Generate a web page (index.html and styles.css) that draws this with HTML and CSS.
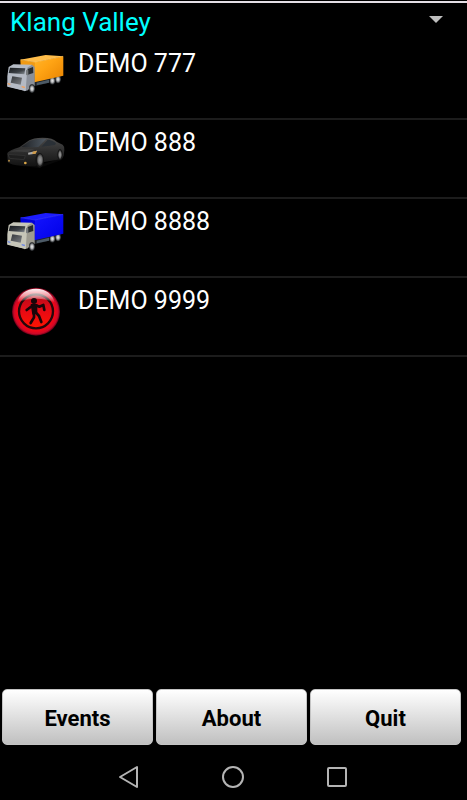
FILE: index.html
```html
<!DOCTYPE html>
<html lang="en">
<head>
    <meta charset="UTF-8">
    <meta name="viewport" content="width=device-width, initial-scale=1.0">
    <title>Vehicles</title>
    <link rel="stylesheet" href="styles.css">
</head>
<body>
    <!-- shared shapes and gradients -->
    <svg class="defs" width="0" height="0" aria-hidden="true">
        <defs>
            <linearGradient id="orangeSide" x1="0" y1="0" x2="1" y2="1">
                <stop offset="0" stop-color="#ffb52b"/>
                <stop offset="0.4" stop-color="#ffa414"/>
                <stop offset="1" stop-color="#e88200"/>
            </linearGradient>
            <linearGradient id="blueSide" x1="0" y1="0" x2="1" y2="1">
                <stop offset="0" stop-color="#1414ff"/>
                <stop offset="1" stop-color="#0000e6"/>
            </linearGradient>
            <linearGradient id="glass" x1="0" y1="0" x2="1" y2="1">
                <stop offset="0" stop-color="#15181b"/>
                <stop offset="0.6" stop-color="#3c4146"/>
                <stop offset="1" stop-color="#8d949a"/>
            </linearGradient>
            <radialGradient id="wheel">
                <stop offset="0" stop-color="#eeeeee"/>
                <stop offset="0.45" stop-color="#b4b6b8"/>
                <stop offset="0.75" stop-color="#55585b"/>
                <stop offset="1" stop-color="#15171a"/>
            </radialGradient>
            <linearGradient id="grille" x1="0" y1="0" x2="1" y2="1">
                <stop offset="0" stop-color="#33363a"/>
                <stop offset="1" stop-color="#7b7f83"/>
            </linearGradient>
            <linearGradient id="carBody" x1="0" y1="0" x2="0" y2="1">
                <stop offset="0" stop-color="#4a4a4a"/>
                <stop offset="0.5" stop-color="#2c2c2c"/>
                <stop offset="1" stop-color="#121212"/>
            </linearGradient>
            <linearGradient id="carGlass" x1="0" y1="0" x2="1" y2="0">
                <stop offset="0" stop-color="#1e2023"/>
                <stop offset="1" stop-color="#4f5963"/>
            </linearGradient>
            <radialGradient id="carWheel">
                <stop offset="0" stop-color="#9a9a9a"/>
                <stop offset="0.6" stop-color="#747474"/>
                <stop offset="1" stop-color="#1c1c1c"/>
            </radialGradient>
            <radialGradient id="ring">
                <stop offset="0" stop-color="#ff1010"/>
                <stop offset="0.8" stop-color="#ee0618"/>
                <stop offset="0.92" stop-color="#cc0828"/>
                <stop offset="1" stop-color="#5c0014"/>
            </radialGradient>
            <linearGradient id="disc" x1="0" y1="0" x2="0" y2="1">
                <stop offset="0" stop-color="#b80a1a"/>
                <stop offset="0.5" stop-color="#e80a14"/>
                <stop offset="1" stop-color="#ff1400"/>
            </linearGradient>
            <linearGradient id="shine" x1="0" y1="0" x2="0" y2="1">
                <stop offset="0" stop-color="#ffffff" stop-opacity="0.95"/>
                <stop offset="0.5" stop-color="#ffffff" stop-opacity="0.6"/>
                <stop offset="1" stop-color="#ffffff" stop-opacity="0"/>
            </linearGradient>
            <symbol id="truck" viewBox="0 0 225 180">
                <path class="chassis" d="M78 112 L182 93 L182 104 L104 124 Z"/>
                <ellipse cx="174" cy="103" rx="9" ry="12" fill="url(#wheel)"/>
                <ellipse cx="157" cy="107" rx="9" ry="12" fill="url(#wheel)"/>
                <path class="box-top" d="M61 44 L137 30 L190 34 L106 52 Z"/>
                <path class="box-front" d="M61 44 L106 51 L103 112 L64 100 Z"/>
                <path class="box-side" d="M105 51 L190 34 L190 92 L103 112 Z"/>
                <path class="box-edge" d="M62 44 L105 51 L189 34"/>
                <path class="cab-side" d="M74 66 L96 59 L104 66 L104 124 L94 121 L84 136 L73 139 Z"/>
                <path class="cab" d="M26 66 L40 58 L96 59 L82 68 L77 138 L22 124 L22 94 Z"/>
                <path d="M30 68 L76 70 L73 88 L26 84 Z" fill="url(#glass)"/>
                <path d="M83 72 L99 66 L100 84 L83 89 Z" fill="#272b2e"/>
                <rect x="78" y="74" width="7" height="17" rx="3" fill="#777b7d"/>
                <path d="M37 94 L66 98 L62 119 L32 113 Z" fill="url(#grille)"/>
                <path class="bumper" d="M22 113 L32 115 L65 122 L78 124 L76 138 L22 125 Z"/>
                <ellipse cx="96" cy="131" rx="9" ry="13" fill="url(#wheel)"/>
                <path class="lamp" d="M23 114 L31 116 L31 120 L23 118 Z M65 123 L75 125 L74 130 L65 127 Z"/>
                <path d="M110 113 L147 104 L147 113 L110 121 Z" fill="#4c5a66"/>
            </symbol>
        </defs>
    </svg>

    <div class="screen">
        <header class="region">
            <select class="region-select" aria-label="Region">
                <option>Klang Valley</option>
            </select>
        </header>

        <ul class="vehicles">
            <li class="vehicle">
                <svg class="vehicle-icon truck-orange" aria-hidden="true"><use href="#truck"/></svg>
                <span class="vehicle-name">DEMO 777</span>
            </li>
            <li class="vehicle">
                <svg class="vehicle-icon" viewBox="0 -3 225 180" aria-hidden="true">
                    <path d="M24 105 L110 122 L188 98 L182 106 L118 129 L70 124 L24 114 Z" fill="#080808"/>
                    <path d="M22 84 Q27 77 58 67 L88 46 Q98 39 128 38 Q159 38 171 51 L188 59 Q194 64 193 75 L191 92 L186 102 L128 112 L106 124 L65 122 Q31 120 23 111 Z" fill="url(#carBody)"/>
                    <path d="M64 66 L90 47 Q105 41 139 41 L115 66 Q86 68 64 66 Z" fill="url(#carGlass)"/>
                    <path d="M124 65 L143 44 Q156 44 168 55 L165 60 Z" fill="#2a3036"/>
                    <path d="M29 80 Q57 70 104 72 L83 82 Q53 78 29 80 Z" fill="#3c3c3c"/>
                    <path d="M24 88 L76 92 L72 104 L29 100 Z" fill="#1e1e1e" stroke="#383838" stroke-width="2"/>
                    <path d="M84 83 L111 77 L106 86 L85 89 Z" fill="#a9a9a9"/>
                    <path d="M98 80 L111 77 L107 86 L97 87 Z" fill="#d29b45"/>
                    <ellipse cx="119" cy="106" rx="13" ry="22" fill="#151515"/>
                    <ellipse cx="120" cy="105" rx="10" ry="19" fill="url(#carWheel)"/>
                    <ellipse cx="180" cy="89" rx="8" ry="17" fill="#151515"/>
                    <ellipse cx="180" cy="89" rx="6" ry="14" fill="url(#carWheel)"/>
                    <circle cx="27" cy="107" r="3" fill="#b08a44"/>
                    <circle cx="76" cy="114" r="4" fill="#d9a648"/>
                </svg>
                <span class="vehicle-name">DEMO 888</span>
            </li>
            <li class="vehicle">
                <svg class="vehicle-icon truck-blue" aria-hidden="true"><use href="#truck"/></svg>
                <span class="vehicle-name">DEMO 8888</span>
            </li>
            <li class="vehicle">
                <svg class="vehicle-icon" viewBox="0 6 225 180" aria-hidden="true">
                    <circle cx="108" cy="95" r="72" fill="url(#ring)"/>
                    <circle cx="108" cy="94" r="51" fill="url(#disc)" stroke="#25080b" stroke-width="7"/>
                    <path d="M52 68 Q62 27 108 26 Q154 27 164 68 Q139 56 108 56 Q77 56 52 68 Z" fill="url(#shine)"/>
                    <circle cx="102" cy="63" r="9" fill="#180609"/>
                    <path d="M92 72 L112 72 L112 98 L97 104 Z" fill="#180609"/>
                    <path d="M96 78 L80 90 M108 76 L118 80 L130 75 L133 90 M102 98 L102 112 L92 129 M108 98 L117 108 L124 126" fill="none" stroke="#180609" stroke-width="8" stroke-linejoin="round" stroke-linecap="round"/>
                </svg>
                <span class="vehicle-name">DEMO 9999</span>
            </li>
        </ul>

        <div class="actions">
            <button type="button">Events</button>
            <button type="button">About</button>
            <button type="button">Quit</button>
        </div>

        <nav class="system-nav">
            <button type="button" aria-label="Back">
                <svg viewBox="0 0 24 24"><path d="M3 12 L20 2 V22 Z"/></svg>
            </button>
            <button type="button" aria-label="Home">
                <svg viewBox="0 0 24 24"><circle cx="12" cy="12" r="10"/></svg>
            </button>
            <button type="button" aria-label="Recent apps">
                <svg viewBox="0 0 24 24"><rect x="3" y="3" width="18" height="18" rx="1"/></svg>
            </button>
        </nav>
    </div>
</body>
</html>
```

FILE: styles.css
```css
* {
    box-sizing: border-box;
}
body {
    margin: 0;
    background: #000;
    color: #fff;
    font-family: Roboto, sans-serif;
}
.defs {
    position: absolute;
}
.screen {
    display: flex;
    flex-direction: column;
    min-height: 100vh;
    padding-top: 1px;
}

/* region drop-down */
.region {
    display: flex;
    align-items: center;
    height: 40px;
    padding-right: 24px;
    border-top: 2px solid #e4dfe6;
}
.region::after {
    content: "";
    border: 7px solid transparent;
    border-top-color: #bebebe;
    border-bottom: 0;
    margin-bottom: 6px;
}
.region-select {
    flex: 1;
    appearance: none;
    height: 38px;
    padding: 0 10px;
    border: 0;
    background: transparent;
    color: #00ffff;
    font-family: inherit;
    font-size: 26px;
}

/* vehicle list */
.vehicles {
    flex: 1;
    margin: 0;
    padding: 0;
    list-style: none;
}
.vehicle {
    display: flex;
    gap: 3px;
    height: 79px;
    border-bottom: 2px solid #1c1c1c;
}
.vehicle-icon {
    width: 75px;
    height: 60px;
    margin-top: 4px;
}
.vehicle-name {
    margin-top: 8px;
    font-size: 25px;
    line-height: 30px;
}

/* truck colours */
.box-edge {
    fill: none;
    stroke: var(--edge);
    stroke-width: 2;
}
.box-top {
    fill: var(--top);
}
.box-front {
    fill: var(--front);
}
.box-side {
    fill: var(--side);
}
.cab {
    fill: var(--cab);
}
.cab-side {
    fill: var(--cab-side);
}
.bumper {
    fill: var(--cab);
}
.chassis {
    fill: #1c2126;
}
.lamp {
    fill: var(--lamp);
}
.truck-orange {
    --edge: #ffc763;
    --top: #ffbd4a;
    --front: #f09a14;
    --side: url(#orangeSide);
    --cab: #b4bac4;
    --cab-side: #8a909a;
    --lamp: #f5a05a;
}
.truck-blue {
    --edge: #3a3aff;
    --top: #1c1cff;
    --front: #0000d8;
    --side: url(#blueSide);
    --cab: #c6c6b8;
    --cab-side: #9c9b90;
    --lamp: #6a86e8;
}

/* bottom buttons */
.actions {
    display: flex;
    gap: 3px;
    padding: 0 6px 0 2px;
}
.actions button {
    flex: 1;
    height: 56px;
    padding: 2px 0 0;
    border: 1px solid #c4c4c4;
    border-radius: 5px;
    background: linear-gradient(#fff, #c0c0c0);
    color: #000;
    font-family: inherit;
    font-size: 22px;
    font-weight: bold;
}

/* system navigation */
.system-nav {
    display: flex;
    justify-content: center;
    gap: 80px;
    padding: 20px 2px 11px 0;
}
.system-nav button {
    width: 24px;
    height: 24px;
    padding: 0;
    border: 0;
    background: none;
}
.system-nav svg {
    display: block;
    fill: none;
    stroke: #b4b4b4;
    stroke-width: 2;
    stroke-linejoin: round;
}
```
